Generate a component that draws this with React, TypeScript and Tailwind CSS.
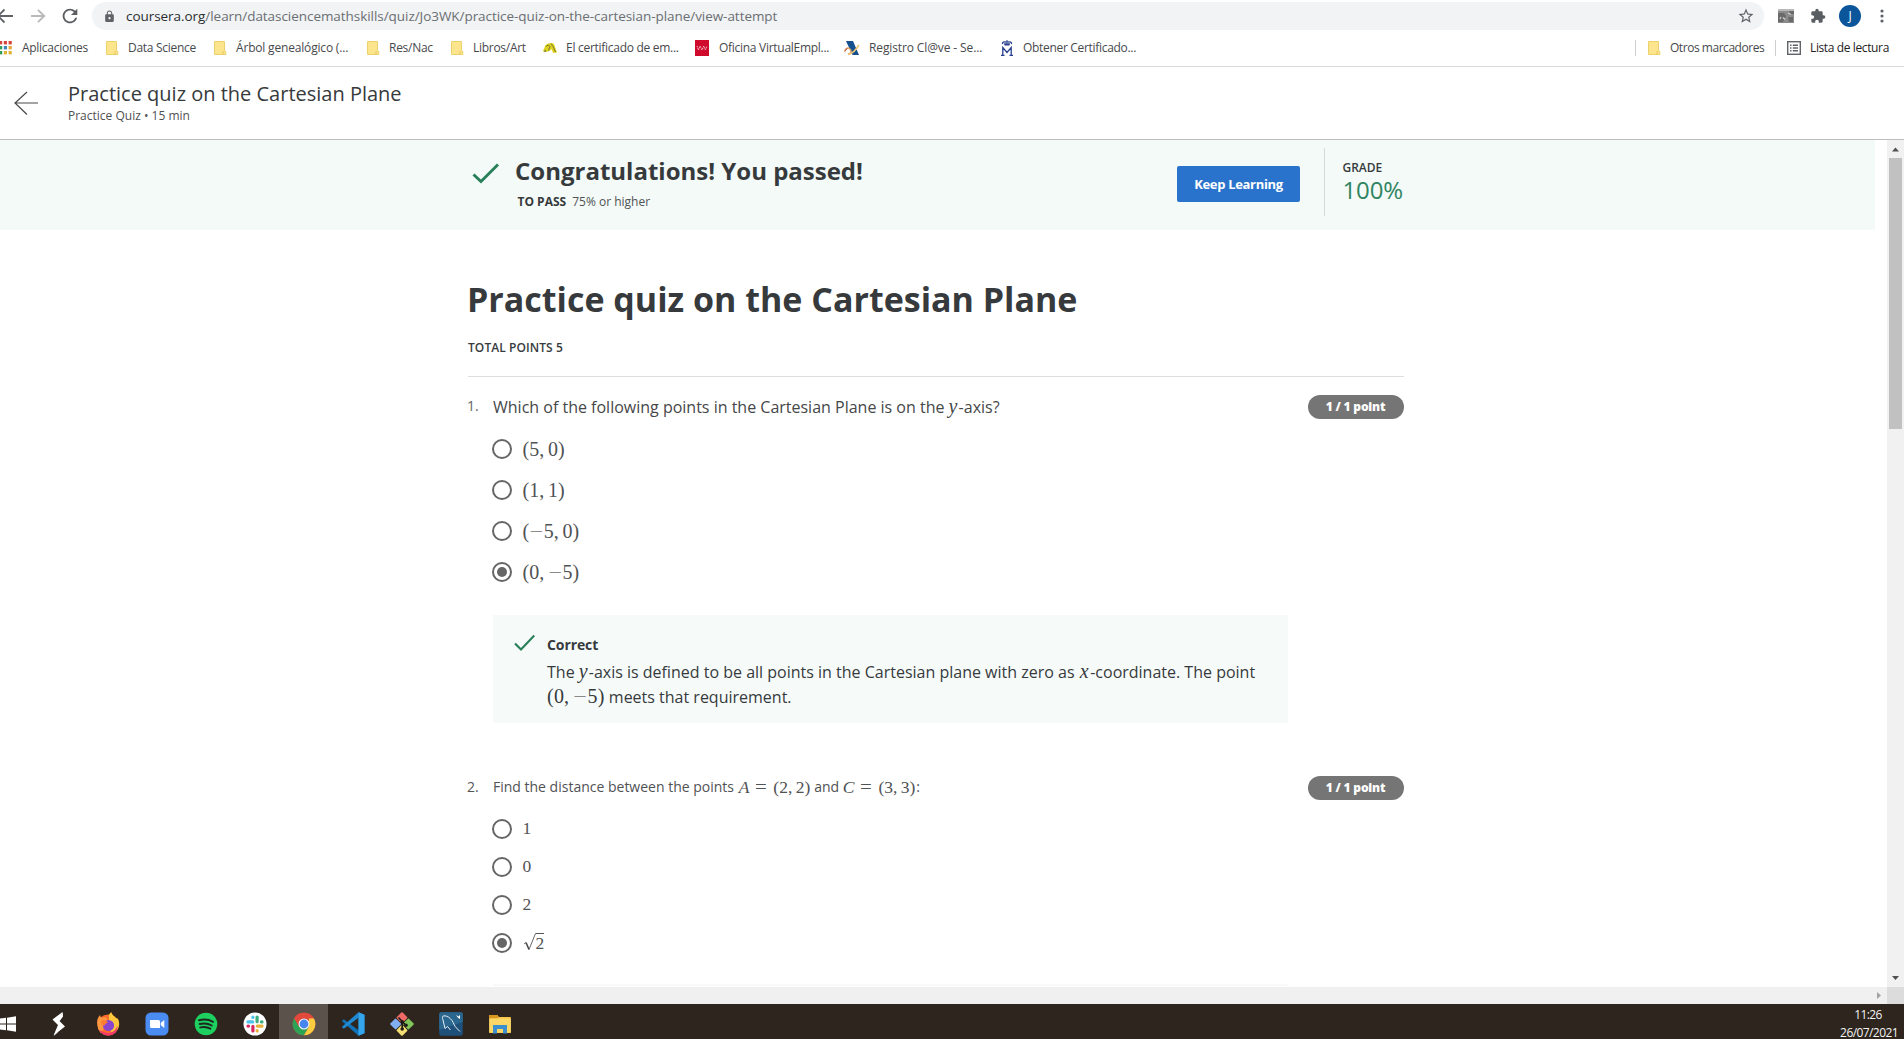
import type { ReactNode } from "react";
import { MdExtension, MdLock, MdRefresh, MdStarBorder } from "react-icons/md";

function Folder() {
  return (
    <svg width="13" height="15" viewBox="0 0 13 15">
      <path d="M.5.5h10v9.3l1.3.6v3.1H.5z" fill="#fde58e" stroke="#ecd06c" />
      <path d="M9 10v3.5" stroke="#e6c55c" />
    </svg>
  );
}

function AppsIcon() {
  const dots = [
    ["#d9453a", "#d9453a", "#d9453a"],
    ["#2f9e58", "#4285b8", "#e6a93a"],
    ["#2f9e58", "#e0b338", "#e0b338"],
  ];
  return (
    <svg width="12" height="14" viewBox="0 0 12 14">
      {dots.map((row, r) =>
        row.map((c, i) => <rect key={`${r}-${i}`} x={-1 + i * 4.8} y={r * 5} width="3.2" height="3.4" fill={c} />)
      )}
    </svg>
  );
}

function FnmtIcon() {
  return (
    <svg width="14" height="12" viewBox="0 0 14 12">
      <path d="M0 9 2.500 3 5 1.500 9 1l2 1 3 8.500-4 .5L8.500 7 6.500 9 3 10z" fill="#dfd424" />
      <path d="M3 4.500 5.500 3 7 4.500 5.500 8.500M8 1.500l2 3 2.500 5.500" stroke="#6d6a2a" strokeWidth=".9" fill="none" />
      <path d="M.3 9.500 2.500 7.500l.8 2.500z" fill="#8a8430" />
    </svg>
  );
}

function MadridIcon() {
  return (
    <svg width="14" height="16" viewBox="0 0 14 16">
      <rect width="14" height="16" fill="#cf0a2c" />
      <path d="m2 6 1.500 4L5 6l2 4 1.800-4 1.600 4L12 6" stroke="#fbd5dc" strokeWidth=".9" strokeDasharray="1.300 .7" fill="none" />
    </svg>
  );
}

function ClaveIcon() {
  return (
    <svg width="16" height="16" viewBox="0 0 16 16">
      <path d="M2 1h7l6 14H8.500z" fill="#15508e" />
      <path d="M.5 12C1.500 8.500 3.500 7 5.500 8.500S8 13 4 14.500" stroke="#d9a066" strokeWidth="1.500" fill="none" />
      <path d="M4 14.500C9 13.500 12 10 15 5" stroke="#eec479" strokeWidth="1.600" fill="none" />
      <path d="M1 10.500 3.500 8.500" stroke="#c94f43" />
    </svg>
  );
}

function CrownMIcon() {
  return (
    <svg width="12" height="16" viewBox="0 0 12 16">
      <path d="M6 0v2" stroke="#27408f" />
      <path d="M1.500 4.200C1 2 3 1.500 6 2.200c3-.7 5 0 4.500 2" stroke="#27408f" strokeWidth="1.300" fill="none" />
      <path d="M3 3.300h6L8.500 5.500h-5z" fill="#27408f" />
      <path d="M0 15.300h3.500M8.500 15.300H12M1.800 15V7.500L6 12.500l4.200-5V15" stroke="#27408f" strokeWidth="1.300" fill="none" />
    </svg>
  );
}

function Bookmark({ width, iconWidth, icon, children }: { width: string; iconWidth: string; icon: ReactNode; children: ReactNode }) {
  return (
    <div className={`flex shrink-0 items-center ${width}`}>
      <span className={`flex shrink-0 ${iconWidth}`}>{icon}</span>
      <span>{children}</span>
    </div>
  );
}

function BrowserBar() {
  return (
    <div className="h-[67px] shrink-0 border-b border-[#d9d9d9] bg-white">
      <div className="flex h-[32px] items-center">
        <svg className="shrink-0" width="92" height="32" viewBox="0 0 92 32" fill="none" strokeWidth="1.900">
          <path d="M13 16H-3M4.500 9.500-2 16l6.500 6.500" stroke="#5f6368" />
          <path d="M31 16h13M38 9.800 44.200 16 38 22.200" stroke="#bababa" />
        </svg>
        <MdRefresh className="-ml-[33px] mr-[11px] size-[22px] shrink-0 text-[#5a5d61]" />
        <div className="flex h-7 w-[1672px] items-center rounded-full bg-[#f1f3f4] pr-[9px]">
          <MdLock className="ml-[11px] size-[13px] text-[#5f6368]" />
          <span className="ml-[10px] flex-1 whitespace-nowrap text-[13.500px] tracking-[-0.050px] text-[#6b6f73]">
            <span className="text-[#2b2d30]">coursera.org</span>/learn/datasciencemathskills/quiz/Jo3WK/practice-quiz-on-the-cartesian-plane/view-attempt
          </span>
          <MdStarBorder className="size-[18px] text-[#5f6368]" />
        </div>
        <svg className="ml-[14px] shrink-0" width="16" height="16" viewBox="0 0 16 16">
          <rect y="1" width="16" height="14" fill="#8b8b8b" />
          <path d="M0 1h16v2H0z" fill="#b9b9b9" />
          <path d="M0 5h6l2 3-3 6H0zM10 9h5v5h-4zM11 3h5v3h-4z" fill="#6a6a6a" />
          <path d="m10 5 3 1.500M5 9.500l2 2M2 11l1-2" stroke="#d0d0d0" strokeWidth="1.200" />
        </svg>
        <MdExtension className="ml-[16px] size-[16px] shrink-0 text-[#5a5d61]" />
        <span className="ml-[13px] flex size-[22px] shrink-0 items-center justify-center rounded-full bg-[#0b569b] text-xs text-white">J</span>
        <svg className="ml-[19px] shrink-0" width="4" height="14" viewBox="0 0 4 14" fill="#5f6368">
          <circle cx="2" cy="2" r="1.600" />
          <circle cx="2" cy="7" r="1.600" />
          <circle cx="2" cy="12" r="1.600" />
        </svg>
      </div>
      <div className="flex h-[32px] items-center whitespace-nowrap text-[12px] tracking-[-0.280px] text-[#47494c]">
        <Bookmark width="w-[106px]" iconWidth="w-[22px]" icon={<AppsIcon />}>Aplicaciones</Bookmark>
        <Bookmark width="w-[108px]" iconWidth="w-[22px]" icon={<Folder />}>Data Science</Bookmark>
        <Bookmark width="w-[153px]" iconWidth="w-[22px]" icon={<Folder />}><span className="tracking-[-0.180px]">Árbol genealógico (...</span></Bookmark>
        <Bookmark width="w-[84px]" iconWidth="w-[22px]" icon={<Folder />}>Res/Nac</Bookmark>
        <Bookmark width="w-[92px]" iconWidth="w-[22px]" icon={<Folder />}>Libros/Art</Bookmark>
        <Bookmark width="w-[152px]" iconWidth="w-[23px]" icon={<FnmtIcon />}>El certificado de em...</Bookmark>
        <Bookmark width="w-[149px]" iconWidth="w-[24px]" icon={<MadridIcon />}>Oficina VirtualEmpl...</Bookmark>
        <Bookmark width="w-[157px]" iconWidth="w-[25px]" icon={<ClaveIcon />}><span className="tracking-[-0.120px]">Registro Cl@ve - Se...</span></Bookmark>
        <Bookmark width="w-[134px]" iconWidth="w-[22px]" icon={<CrownMIcon />}><span className="tracking-[-0.310px]">Obtener Certificado...</span></Bookmark>
        <div className="flex-1" />
        <span className="mr-[12px] h-4 w-px bg-[#cfcfcf]" />
        <Bookmark width="w-[127px]" iconWidth="w-[22px]" icon={<Folder />}><span className="tracking-[-0.460px]">Otros marcadores</span></Bookmark>
        <span className="mr-[11px] h-4 w-px bg-[#cfcfcf]" />
        <svg className="shrink-0" width="14" height="14" viewBox="0 0 14 14" fill="none" stroke="#5f6368" strokeWidth="1.400">
          <rect x=".7" y=".7" width="12.600" height="12.600" />
          <path d="M3 4.200h1.500M3 7h1.500M3 9.800h1.500M5.800 4.200H11M5.800 7H11M5.800 9.800H11" />
        </svg>
        <span className="ml-[9px] w-[94px] tracking-[-0.380px] text-[#222]">Lista de lectura</span>
      </div>
    </div>
  );
}

function CheckMark({ size }: { size: "lg" | "sm" }) {
  return size === "lg" ? (
    <svg width="28" height="22" viewBox="0 0 28 22" fill="none">
      <path d="M1.500 11.500 9 18.500 26 1.500" stroke="#2a7f5b" strokeWidth="2.900" />
    </svg>
  ) : (
    <svg width="22" height="18" viewBox="0 0 22 18" fill="none">
      <path d="M2 9.500 8 15.500 21.300 1.500" stroke="#2a7f5b" strokeWidth="2.200" />
    </svg>
  );
}

function Radio({ checked }: { checked?: boolean }) {
  return (
    <span className="flex size-5 shrink-0 items-center justify-center rounded-full border-2 border-[#666]">
      {checked && <span className="size-[10px] rounded-full bg-[#666]" />}
    </span>
  );
}

function Minus() {
  return <span className="inline-block w-[14.500px] scale-x-[1.200] text-center text-[#8a8a8a]">−</span>;
}

function Pair({ a, b }: { a: ReactNode; b: ReactNode }) {
  return (
    <span className="font-['Liberation_Serif',serif]">
      ({a},<span className="inline-block w-[0.190em]" />{b})
    </span>
  );
}

function Var({ children }: { children: ReactNode }) {
  return <span className="font-['Liberation_Serif',serif] italic">{children}</span>;
}

function Equals() {
  return <span className="inline-block w-[24px] scale-x-110 text-center font-['Liberation_Serif',serif] text-[19px] leading-none">=</span>;
}

function Sqrt2() {
  return (
    <span className="flex">
      <svg width="13" height="20" viewBox="0 0 13 20" fill="none" stroke="#444">
        <path d="m1 12 2-1.500" strokeWidth=".8" />
        <path d="m3 10.500 3 7" strokeWidth="1.500" />
        <path d="M6 17.500 12.500 1.500H13" strokeWidth=".8" />
      </svg>
      <span className="mt-px border-t border-[#555] leading-[18px]">2</span>
    </span>
  );
}

function PointPill() {
  return (
    <span className="flex h-6 w-24 shrink-0 items-center justify-center rounded-full bg-[#757575] pr-px text-[12px] font-extrabold tracking-[-0.180px] text-white">
      1 / 1 point
    </span>
  );
}

function ResultBanner() {
  return (
    <div className="flex h-[90px] w-[1875px] shrink-0 bg-[#f3faf8] pl-[472px] text-[#373a3c]">
      <div className="pt-[23px]">
        <CheckMark size="lg" />
      </div>
      <div className="w-[677px] pl-[15px] pt-[15px]">
        <div className="text-2xl font-bold leading-8">Congratulations! You passed!</div>
        <div className="mt-[6px] flex gap-[6px] pl-[2.500px] text-xs leading-[18px]">
          <span className="font-bold">TO PASS</span>
          <span className="text-[#505254]">75% or higher</span>
        </div>
      </div>
      <button className="mt-[26px] h-9 w-[123px] rounded-[2px] bg-[#2a73cc] pt-[2px] text-[13px] font-bold tracking-[-0.320px] text-white">Keep Learning</button>
      <div className="ml-[24px] mt-[8px] h-[68px] w-px bg-[#d5dbd9]" />
      <div className="pl-[17.500px] pt-[19px]">
        <div className="text-xs font-semibold leading-[18px]">GRADE</div>
        <div className="-mt-[3px] text-2xl leading-8 tracking-[-0.100px] text-[#2f8562]">100%</div>
      </div>
    </div>
  );
}

function Quiz() {
  const first: [ReactNode, ReactNode][] = [
    ["5", "0"],
    ["1", "1"],
    [<><Minus />5</>, "0"],
    ["0", <><Minus />5</>],
  ];
  return (
    <div className="ml-[468px] w-[936px] shrink-0 text-[#373a3c]">
      <h1 className="-ml-px mt-[46px] text-[34px] font-bold leading-[46px]">Practice quiz on the Cartesian Plane</h1>
      <div className="mt-[17px] h-[38px] border-b border-[#dedede] text-xs font-semibold leading-[18px] tracking-[0.080px]">TOTAL POINTS 5</div>

      <div className="mt-[18px] flex h-6">
        <span className="-ml-px w-[26px] text-sm leading-[22px] text-[#666]">1.</span>
        <div className="flex-1 text-base leading-6 text-[#454749]">
          Which of the following points in the Cartesian Plane is on the <span className="inline-block w-[10px] text-[20px] leading-none"><Var>y</Var></span>-axis?
        </div>
        <PointPill />
      </div>
      <div className="mt-[9px] pl-[24px]">
        {first.map(([a, b], i) => (
          <div key={i} className="flex h-[41px] items-center gap-[10.500px] text-[20px] text-[#505254]">
            <Radio checked={i === 3} />
            <Pair a={a} b={b} />
          </div>
        ))}
      </div>
      <div className="ml-[25px] mt-[23px] flex h-[108px] w-[795px] bg-[#f6fbfa] pl-[20px] pt-[17px]">
        <div className="mt-[2px]">
          <CheckMark size="sm" />
        </div>
        <div className="whitespace-nowrap pl-[12px]">
          <div className="text-sm font-bold leading-[26px] tracking-[-0.100px]">Correct</div>
          <div className="mt-[2px] text-base leading-[25px]">
            The <span className="inline-block w-[10px] text-[20px] leading-none"><Var>y</Var></span>-axis is defined to be all points in the Cartesian plane with zero as <span className="inline-block w-[11.500px] pl-px text-[20px] leading-none"><Var>x</Var></span>-coordinate. The point
          </div>
          <div className="text-base leading-[25px]">
            <span className="text-[20px] leading-none tracking-[0.200px]"><Pair a="0" b={<><Minus />5</>} /></span> meets that requirement.
          </div>
        </div>
      </div>

      <div className="mt-[53px] flex h-6">
        <span className="-ml-px w-[26px] text-sm leading-[22px] text-[#555]">2.</span>
        <div className="flex flex-1 whitespace-pre text-sm leading-[22px] text-[#505254]">
          <span>Find the distance between the points </span>
          <span className="-mt-px pl-px text-[17.500px]">
            <Var>A</Var><Equals /><Pair a="2" b="2" />
          </span>
          <span className="pl-[4px]">and </span>
          <span className="-mt-px text-[17.500px]">
            <Var>C</Var><Equals /><Pair a="3" b="3" />
          </span>
          <span className="pl-px">:</span>
        </div>
        <PointPill />
      </div>
      <div className="mt-[10px] pl-[24px]">
        {["1", "0", "2", "sqrt"].map((v, i) => (
          <div key={v} className="flex h-[38px] items-center gap-[10.500px] font-['Liberation_Serif',serif] text-[17.500px] text-[#505254]">
            <Radio checked={i === 3} />
            <span className="-mt-[2px]">{v === "sqrt" ? <Sqrt2 /> : v}</span>
          </div>
        ))}
      </div>
      <div className="ml-[25px] mt-[22px] h-[2px] w-[795px] bg-[#f8f9f9]" />
    </div>
  );
}

function VerticalScrollbar() {
  return (
    <div className="flex w-[17px] shrink-0 flex-col items-center bg-[#f1f1f1]">
      <svg width="17" height="18" viewBox="0 0 17 18">
        <path d="M5 11.500 8.500 7.500l3.500 4z" fill="#505050" />
      </svg>
      <div className="h-[271px] w-[13px] bg-[#c1c1c1]" />
      <div className="flex-1" />
      <svg width="17" height="17" viewBox="0 0 17 17">
        <path d="M5 6 8.500 10 12 6z" fill="#505050" />
      </svg>
    </div>
  );
}

function Tile({ active, children }: { active?: boolean; children: ReactNode }) {
  return (
    <div className={`flex h-full w-[49px] shrink-0 items-center justify-center pt-[5px] ${active ? "bg-[#5a524b]" : ""}`}>
      <svg width="24" height="24" viewBox="0 0 24 24">{children}</svg>
    </div>
  );
}

function Taskbar() {
  return (
    <div className="flex h-[35px] shrink-0 items-center bg-[#2d251e]">
      <svg className="mt-[5px] mr-[18px] shrink-0" width="16" height="18" viewBox="0 0 16 18" fill="#fff">
        <path d="M0 3.500 6 2.800v5.600H0zM7 2.700 16 1.300v7.100H7zM0 9.500h6v5.700l-6-.7zM7 9.500h9v7.300l-9-1.500z" />
      </svg>
      <Tile>
        <path d="m15.500 0-10 7.500L11 13l-4.500 10.500 11.500-9L12.500 9z" fill="#fff" />
        <path d="m15.800 0-4.300 8.200 1.200.8 3.300-4.500zM6.800 24l4.200-8.500 1-2 1 1-2.500 6z" fill="#fff" />
      </Tile>
      <Tile>
        <circle cx="12" cy="13" r="10.500" fill="#ff6a2b" />
        <path d="M1.500 13C0 8 3 4 4.200 3c0 2 1 2.500 2 2.800C8 5.200 10 5 11 6.500L12.500 9 5 21C2.800 19 1.700 16 1.500 13" fill="#ff9640" />
        <path d="M13 5.500C12 3 14 1 15.500.3c.4 3 3 3.500 4.500 5.700 3 0 3.500 5 3 8s-3 6.500-6 8L13 17z" fill="#ffc83c" />
        <path d="M3 18c4 2 8 4 12 2.500s6-5 6-7c2 5-3 10-8 10s-8.500-2.500-10-5.500" fill="#f43a6b" />
        <circle cx="12.500" cy="13.500" r="5.600" fill="#8a45cf" />
        <path d="M5 9c3-1.500 5-.5 7 1.500-2 .5-3 1.500-4 3.500C6 13 5 11 5 9" fill="#ff7b2f" />
      </Tile>
      <Tile>
        <rect x=".5" y=".5" width="23" height="23" rx="5.500" fill="#4a8cf2" />
        <path d="M5 8h8.500A1.500 1.500 0 0 1 15 9.500V16H6.500A1.500 1.500 0 0 1 5 14.500zM15.800 10.800 19.300 8v8l-3.500-2.800z" fill="#fff" />
      </Tile>
      <Tile>
        <circle cx="12" cy="12" r="11.300" fill="#1ed05f" />
        <path d="M5 8.300c4.500-1.300 10-.9 14 1.500M5.700 12c4-1 8.500-.6 12 1.500M6.300 15.400c3.300-.8 7-.5 10 1.300" stroke="#1d2a20" strokeWidth="2" strokeLinecap="round" fill="none" />
      </Tile>
      <Tile>
        <circle cx="12" cy="12" r="11.500" fill="#fff" />
        <g strokeWidth="3.200" strokeLinecap="round" fill="none">
          <path d="M5 9.900h4.700M9.900 5v.5" stroke="#4cc3ea" />
          <path d="M14.100 5v4.700M18.500 9.900h.5" stroke="#3bae7c" />
          <path d="M14.300 14.100H19M14.100 18.500v.5" stroke="#e8b13a" />
          <path d="M9.900 14.300V19M5 14.100h.5" stroke="#d62a5f" />
        </g>
      </Tile>
      <Tile active>
        <circle cx="12" cy="12" r="11.300" fill="#e0493c" />
        <path d="M2.200 6.350A11.300 11.300 0 0 0 12 23.300L16.900 14.800 12 12 7.100 14.800z" fill="#2da455" />
        <path d="M21.800 6.350A11.300 11.300 0 0 1 12 23.300l5-8.500V6.350z" fill="#fccd3e" />
        <path d="M2.200 6.350A11.300 11.300 0 0 1 21.800 6.350H12L7.100 14.800z" fill="#e0493c" />
        <circle cx="12" cy="12" r="5.500" fill="#f3f3f3" />
        <circle cx="12" cy="12" r="4.400" fill="#4685ee" />
      </Tile>
      <Tile>
        <path d="m17.500.3 6 2.500v18.400l-6 2.500L.8 9l2-1.800L17.500 18.300z" fill="#1272b8" />
        <path d="M17.500.3.8 15l2 1.800L17.500 5.700z" fill="#1f8ad2" />
        <path d="m17.500.3 6 2.500v18.400l-6 2.500z" fill="#35a5ec" />
      </Tile>
      <Tile>
        <rect x="7.900" y="1.500" width="8.200" height="8.200" rx="1" transform="rotate(45 12 5.600)" fill="#ee6c65" />
        <rect x="1.500" y="7.900" width="8.200" height="8.200" rx="1" transform="rotate(45 5.600 12)" fill="#82aef2" />
        <rect x="14.300" y="7.900" width="8.200" height="8.200" rx="1" transform="rotate(45 18.400 12)" fill="#80c659" />
        <rect x="7.900" y="14.300" width="8.200" height="8.200" rx="1" transform="rotate(45 12 18.400)" fill="#f6df73" />
        <path d="m8.500 5.500 7.500 8M12.200 9v9" stroke="#211b17" strokeWidth="1.600" />
        <circle cx="12.200" cy="9.800" r="1.800" fill="#211b17" />
        <circle cx="16" cy="13.300" r="1.800" fill="#211b17" />
        <circle cx="12.200" cy="17" r="1.800" fill="#211b17" />
      </Tile>
      <Tile>
        <rect x=".2" y=".3" width="23.600" height="23.400" rx="2" fill="#1e5079" />
        <path d="M.2 2.300a2 2 0 0 1 2-2h19.600a2 2 0 0 1 2 2V10L.2 18z" fill="#2b668f" />
        <path d="M6 16.500 4 8c-.8-2-.8-4 .8-4.200 3.500-.2 6.200 2 8.200 4.700 2 3 2.500 6 4.500 7.500l3.500 3.500M6 16.500l2.500-2 3 3.500" stroke="#e8eef3" strokeWidth="1" fill="none" />
        <path d="m17 3 2.500 1.500L21 3v4l-2-1.200z" fill="#fff" />
      </Tile>
      <Tile>
        <path d="M1.300 3h8l1.500 2h12v16H1.300z" fill="#f5c548" />
        <path d="M1.300 3h8l1.500 2-1.500 1.500h-8z" fill="#d9971e" />
        <path d="M1.300 6.500h21.500V20.500H1.300z" fill="#fbd768" />
        <path d="M5 13h14v8.500h-4V17H9v4.500H5z" fill="#3c8fce" />
      </Tile>
      <div className="flex-1" />
      <div className="mr-[6px] mt-[2px] text-center text-[12px] leading-[18px] tracking-[-0.580px] text-[#f3f3f3]">
        <div className="mt-[2px] pr-[2px]">11:26</div>
        <div>26/07/2021</div>
      </div>
    </div>
  );
}

export default function App() {
  return (
    <div className="flex h-[1039px] w-[1904px] flex-col overflow-hidden bg-white font-['Open_Sans',sans-serif]">
      <BrowserBar />
      <header className="flex h-[73px] shrink-0 border-b border-[#bdbdbd] text-[#373a3c]">
        <svg className="ml-[14px] mt-[24px]" width="24" height="24" viewBox="0 0 24 24" fill="none" stroke="#4a4a4a" strokeWidth="1.200">
          <path d="M24 12H1M13 1 1 12l12 11.500" />
        </svg>
        <div className="pl-[30px] pt-[13px]">
          <div className="text-xl leading-7">Practice quiz on the Cartesian Plane</div>
          <div className="text-xs leading-4 text-[#505254]">Practice Quiz • 15 min</div>
        </div>
      </header>
      <main className="flex h-[847px] shrink-0">
        <div className="flex flex-1 flex-col overflow-hidden">
          <ResultBanner />
          <Quiz />
        </div>
        <VerticalScrollbar />
      </main>
      <div className="flex h-[17px] shrink-0 bg-[#f0f0f0]">
        <svg className="ml-[1870px]" width="17" height="17" viewBox="0 0 17 17">
          <path d="M7 5v7l4-3.500z" fill="#a3a3a3" />
        </svg>
        <div className="flex-1 bg-[#dcdcdc]" />
      </div>
      <Taskbar />
    </div>
  );
}
